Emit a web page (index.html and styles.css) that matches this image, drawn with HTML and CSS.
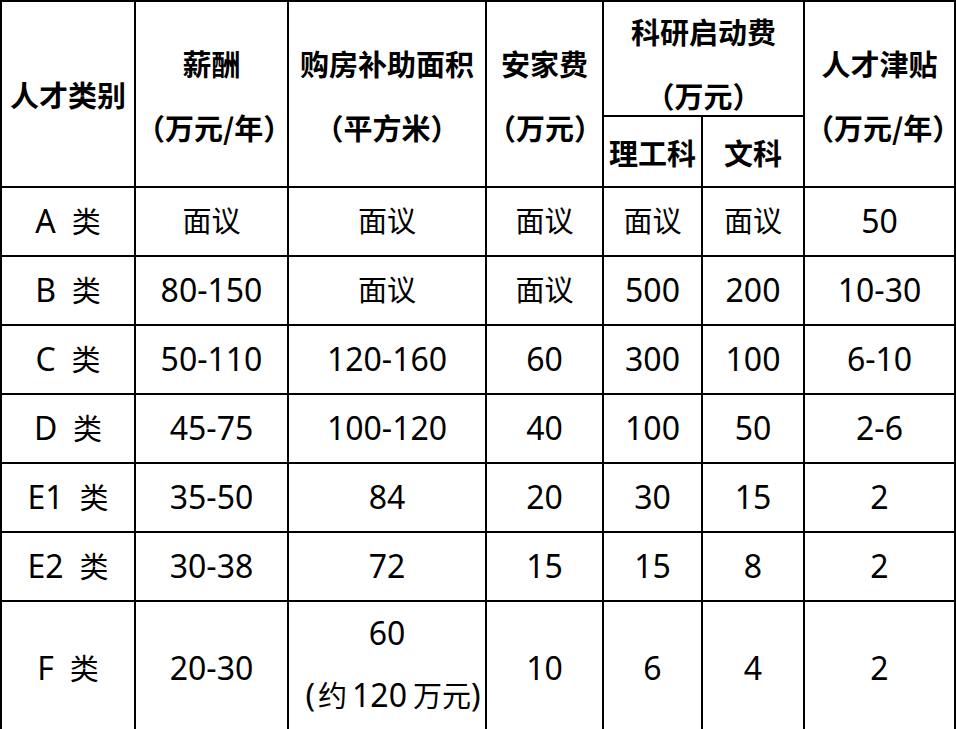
FILE: index.html
```html
<!DOCTYPE html>
<html lang="zh-CN">
<head>
<meta charset="utf-8">
<link rel="stylesheet" href="styles.css">
</head>
<body>
<table class="grid">
  <colgroup>
    <col class="c1"><col class="c2"><col class="c3"><col class="c4"><col class="c5"><col class="c6"><col class="c7">
  </colgroup>
  <thead>
    <tr class="h1">
      <th rowspan="2" class="cat">人才类别</th>
      <th rowspan="2"><div class="two">薪酬<br>（万元/年）</div></th>
      <th rowspan="2"><div class="two">购房补助面积<br>（平方米）</div></th>
      <th rowspan="2"><div class="two">安家费<br>（万元）</div></th>
      <th colspan="2" class="sup"><div class="two">科研启动费<br>（万元）</div></th>
      <th rowspan="2"><div class="two">人才津贴<br>（万元/年）</div></th>
    </tr>
    <tr class="h2">
      <th class="sub">理工科</th>
      <th class="sub">文科</th>
    </tr>
  </thead>
  <tbody>
    <tr><td>A&nbsp;<span class="cn">&nbsp;类</span></td><td class="cn">面议</td><td class="cn">面议</td><td class="cn">面议</td><td class="cn">面议</td><td class="cn">面议</td><td>50</td></tr>
    <tr><td>B&nbsp;<span class="cn">&nbsp;类</span></td><td>80-150</td><td class="cn">面议</td><td class="cn">面议</td><td>500</td><td>200</td><td>10-30</td></tr>
    <tr><td>C&nbsp;<span class="cn">&nbsp;类</span></td><td>50-110</td><td>120-160</td><td>60</td><td>300</td><td>100</td><td>6-10</td></tr>
    <tr><td>D&nbsp;<span class="cn">&nbsp;类</span></td><td>45-75</td><td>100-120</td><td>40</td><td>100</td><td>50</td><td>2-6</td></tr>
    <tr><td>E1&nbsp;<span class="cn">&nbsp;类</span></td><td>35-50</td><td>84</td><td>20</td><td>30</td><td>15</td><td>2</td></tr>
    <tr><td>E2&nbsp;<span class="cn">&nbsp;类</span></td><td>30-38</td><td>72</td><td>15</td><td>15</td><td>8</td><td>2</td></tr>
    <tr class="last"><td>F&nbsp;<span class="cn">&nbsp;类</span></td><td>20-30</td><td><div class="two">60<br><span class="approx">(<span class="cn yue">约</span>120<span class="cn wan">万元</span>)</span></div></td><td>10</td><td>6</td><td>4</td><td>2</td></tr>
  </tbody>
</table>
</body>
</html>
```
FILE: styles.css
```css
html, body {
  margin: 0;
  padding: 0;
  background: #fff;
}
body {
  font-family: "Noto Sans", "Noto Sans CJK SC", sans-serif;
  color: #000;
}
.grid {
  border-collapse: collapse;
  table-layout: fixed;
  width: 955px;
  margin: 0;
}
.c1 { width: 134px; }
.c2 { width: 153px; }
.c3 { width: 198px; }
.c4 { width: 117px; }
.c5 { width: 99px; }
.c6 { width: 102px; }
.c7 { width: 151px; }
.grid th, .grid td {
  border: 2px solid #000;
  padding: 0;
  text-align: center;
  vertical-align: middle;
  white-space: nowrap;
  overflow: visible;
}
.grid th {
  font-family: "Noto Sans CJK SC", sans-serif;
  font-weight: 700;
  font-size: 29px;
}
.grid td {
  font-weight: 400;
  font-size: 32px;
  line-height: 1.2;
}
.grid td.cn, .grid td .cn {
  font-size: 29px;
}
.h1 { height: 115px; }
.h2 { height: 71px; }
.grid tbody tr { height: 69px; }
.grid tbody tr.last { height: 126px; }
.two {
  line-height: 64px;
}
.grid th .two {
  padding-top: 1px;
}
.grid th.cat {
  padding-top: 0;
}
.grid th.sup {
  vertical-align: top;
}
.grid th.sup .two {
  height: 111px;
  padding-top: 0;
  margin-top: -3px;
  box-sizing: border-box;
}
.sub {
  padding-top: 2px;
}
.approx {
  margin-left: 12px;
}
.yue {
  margin: 0 5px 0 3px;
}
.wan {
  margin-left: 6px;
}
.grid tr.last .two {
  line-height: 62px;
  padding-bottom: 7px;
}
```
